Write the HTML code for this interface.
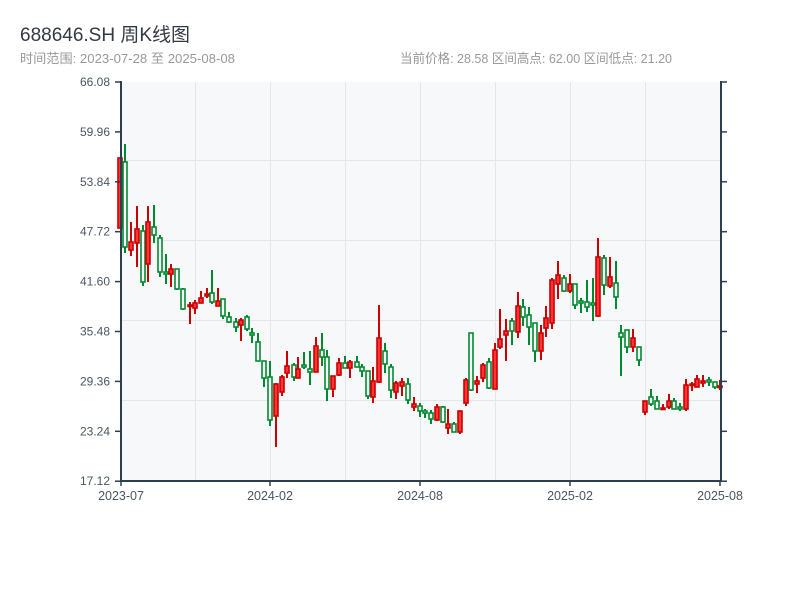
<!DOCTYPE html>
<html><head><meta charset="utf-8"><style>
html,body{margin:0;padding:0;background:#fff;width:800px;height:600px;overflow:hidden}
svg text{font-family:"Liberation Sans","Noto Sans CJK SC",sans-serif}
</style></head><body>
<svg id="s" width="800" height="600" xmlns="http://www.w3.org/2000/svg">
<text x="20" y="41" font-size="19" fill="#333a44">688646.SH 周K线图</text>
<text x="20" y="63" font-size="13" fill="#999" textLength="215" lengthAdjust="spacingAndGlyphs">时间范围: 2023-07-28 至 2025-08-08</text>
<text x="400" y="63" font-size="13" fill="#999" textLength="272" lengthAdjust="spacingAndGlyphs">当前价格: 28.58 区间高点: 62.00 区间低点: 21.20</text>
<rect x="121" y="82" width="600" height="399" fill="#f7f8fa"/>
<g id="grid" stroke="#e3e5e9" stroke-width="1"></g>
<g id="c"></g>
<g stroke="#2c3e50" stroke-width="2" fill="none">
<line x1="121" y1="81" x2="121" y2="482"/>
<line x1="721" y1="81" x2="721" y2="482"/>
<line x1="120" y1="481" x2="722" y2="481"/>
</g>
<g id="ax" fill="#4a5563"></g>
</svg>
<script>
var NS="http://www.w3.org/2000/svg";
function el(p,t,a,txt){var e=document.createElementNS(NS,t);for(var k in a)e.setAttribute(k,a[k]);if(txt)e.textContent=txt;p.appendChild(e);return e;}
var g=document.getElementById('grid');
[160,240,320,400].forEach(function(y){el(g,'line',{x1:121,x2:721,y1:y+.5,y2:y+.5});});
[195,270,345,420,495,570,645].forEach(function(x){el(g,'line',{x1:x+.5,x2:x+.5,y1:82,y2:481});});
var ax=document.getElementById('ax');
var labs=["66.08","59.96","53.84","47.72","41.60","35.48","29.36","23.24","17.12"];
labs.forEach(function(l,i){var y=82+i*49.9;
el(ax,'line',{x1:115,x2:121,y1:y,y2:y,stroke:'#2c3e50','stroke-width':1.5});
el(ax,'line',{x1:721,x2:727,y1:y,y2:y,stroke:'#2c3e50','stroke-width':1.5});
el(ax,'text',{x:110,y:y+4,'text-anchor':'end','font-size':12},l);});
[["2023-07",121],["2024-02",270],["2024-08",420],["2025-02",570],["2025-08",720]].forEach(function(d){
el(ax,'line',{x1:d[1],x2:d[1],y1:481,y2:486,stroke:'#2c3e50','stroke-width':1.5});
el(ax,'text',{x:d[1],y:500,'text-anchor':'middle','font-size':12.5},d[0]);});
var C=[
[120,158,228,158,228,1],[125,162,247,144,253,0],[131,242,250,222,256,1],[137,229,243,206,267,1],
[143,231,282,225,286,0],[148,222,264,206,282,1],[154,227,235,205,243,0],[160,238,272,235,277,0],
[166,272,274,254,284,0],[171,269,274,264,287,1],[177,269,289,269,290,0],[183,289,309,288,310,0],
[190,305,306,302,324,1],[195,303,308,300,314,1],[201,298,303,291,303,1],[207,294,296,288,298,1],
[212,293,302,270,304,0],[218,301,306,288,306,1],[223,299,316,299,319,0],[229,317,322,312,323,0],
[236,322,327,318,332,0],[241,320,325,318,341,1],[247,317,329,315,331,0],[252,333,335,328,343,0],
[258,342,361,333,361,0],[264,361,378,361,387,0],[270,377,420,361,426,0],[276,384,416,383,447,1],
[282,377,392,375,396,1],[287,366,373,351,378,1],[294,365,377,363,381,0],[298,369,378,357,378,1],
[304,365,367,352,369,0],[310,369,372,351,385,0],[316,346,372,337,372,1],[322,350,357,333,366,0],
[327,357,389,350,401,0],[333,376,389,376,397,1],[339,363,375,358,376,1],[345,363,368,356,368,0],
[350,362,368,360,378,1],[357,362,367,356,367,0],[362,367,371,364,377,0],[368,371,396,371,399,0],
[373,381,397,367,403,1],[379,338,382,305,383,1],[385,351,364,343,373,0],[391,367,390,364,398,0],
[396,383,392,381,399,1],[402,382,386,378,396,1],[408,384,400,378,404,0],[414,404,407,397,411,1],
[420,406,411,403,417,0],[425,411,413,409,418,0],[431,413,419,410,424,0],[437,407,420,404,421,1],
[443,407,422,406,423,0],[448,424,428,409,434,1],[454,424,432,422,432,0],[460,411,432,411,434,1],
[466,380,403,378,406,1],[471,333,390,333,391,0],[477,381,384,376,393,1],[483,365,378,363,382,1],
[489,362,388,358,389,0],[495,350,389,343,389,1],[500,339,347,309,349,1],[506,331,335,319,361,1],
[512,321,331,318,345,0],[518,306,332,292,338,1],[523,307,317,299,326,0],[529,315,327,307,345,0],
[535,323,351,323,362,0],[541,333,351,325,360,1],[546,318,328,306,337,1],[552,280,323,278,329,1],
[558,275,284,261,299,1],[564,278,291,275,292,0],[570,284,291,274,293,1],[575,284,305,284,309,0],
[581,301,303,298,313,0],[587,302,307,280,312,0],[593,303,305,278,321,0],[598,257,316,238,317,1],
[604,258,285,255,295,0],[610,277,286,257,288,1],[616,283,297,261,309,0],[621,333,337,325,376,0],
[627,330,347,330,353,0],[633,338,347,329,352,1],[639,347,360,347,366,0],[645,401,412,401,415,1],
[651,397,404,389,406,0],[657,401,409,396,409,0],[663,408,409,404,410,1],[669,401,407,394,409,1],
[674,401,409,398,409,0],[680,407,409,403,411,0],[686,385,409,379,411,1],[692,384,385,382,391,1],
[697,379,387,375,387,1],[703,381,383,375,387,1],[709,380,382,377,386,0],[715,382,387,382,389,0],
[720,386,387,380,390,1]];
var c=document.getElementById('c');
C.forEach(function(d){var x=d[0],up=d[5];var sc=up?'#cc0000':'#008a30';
el(c,'line',{x1:x,x2:x,y1:d[3],y2:d[4],stroke:sc,'stroke-width':2});
var h=Math.max(d[2]-d[1],1.5);
el(c,'rect',{x:x-2,y:d[1],width:4,height:h,fill:up?'#ff3333':'#f7f8fa',stroke:sc,'stroke-width':1.6});});
</script>
</body></html>
